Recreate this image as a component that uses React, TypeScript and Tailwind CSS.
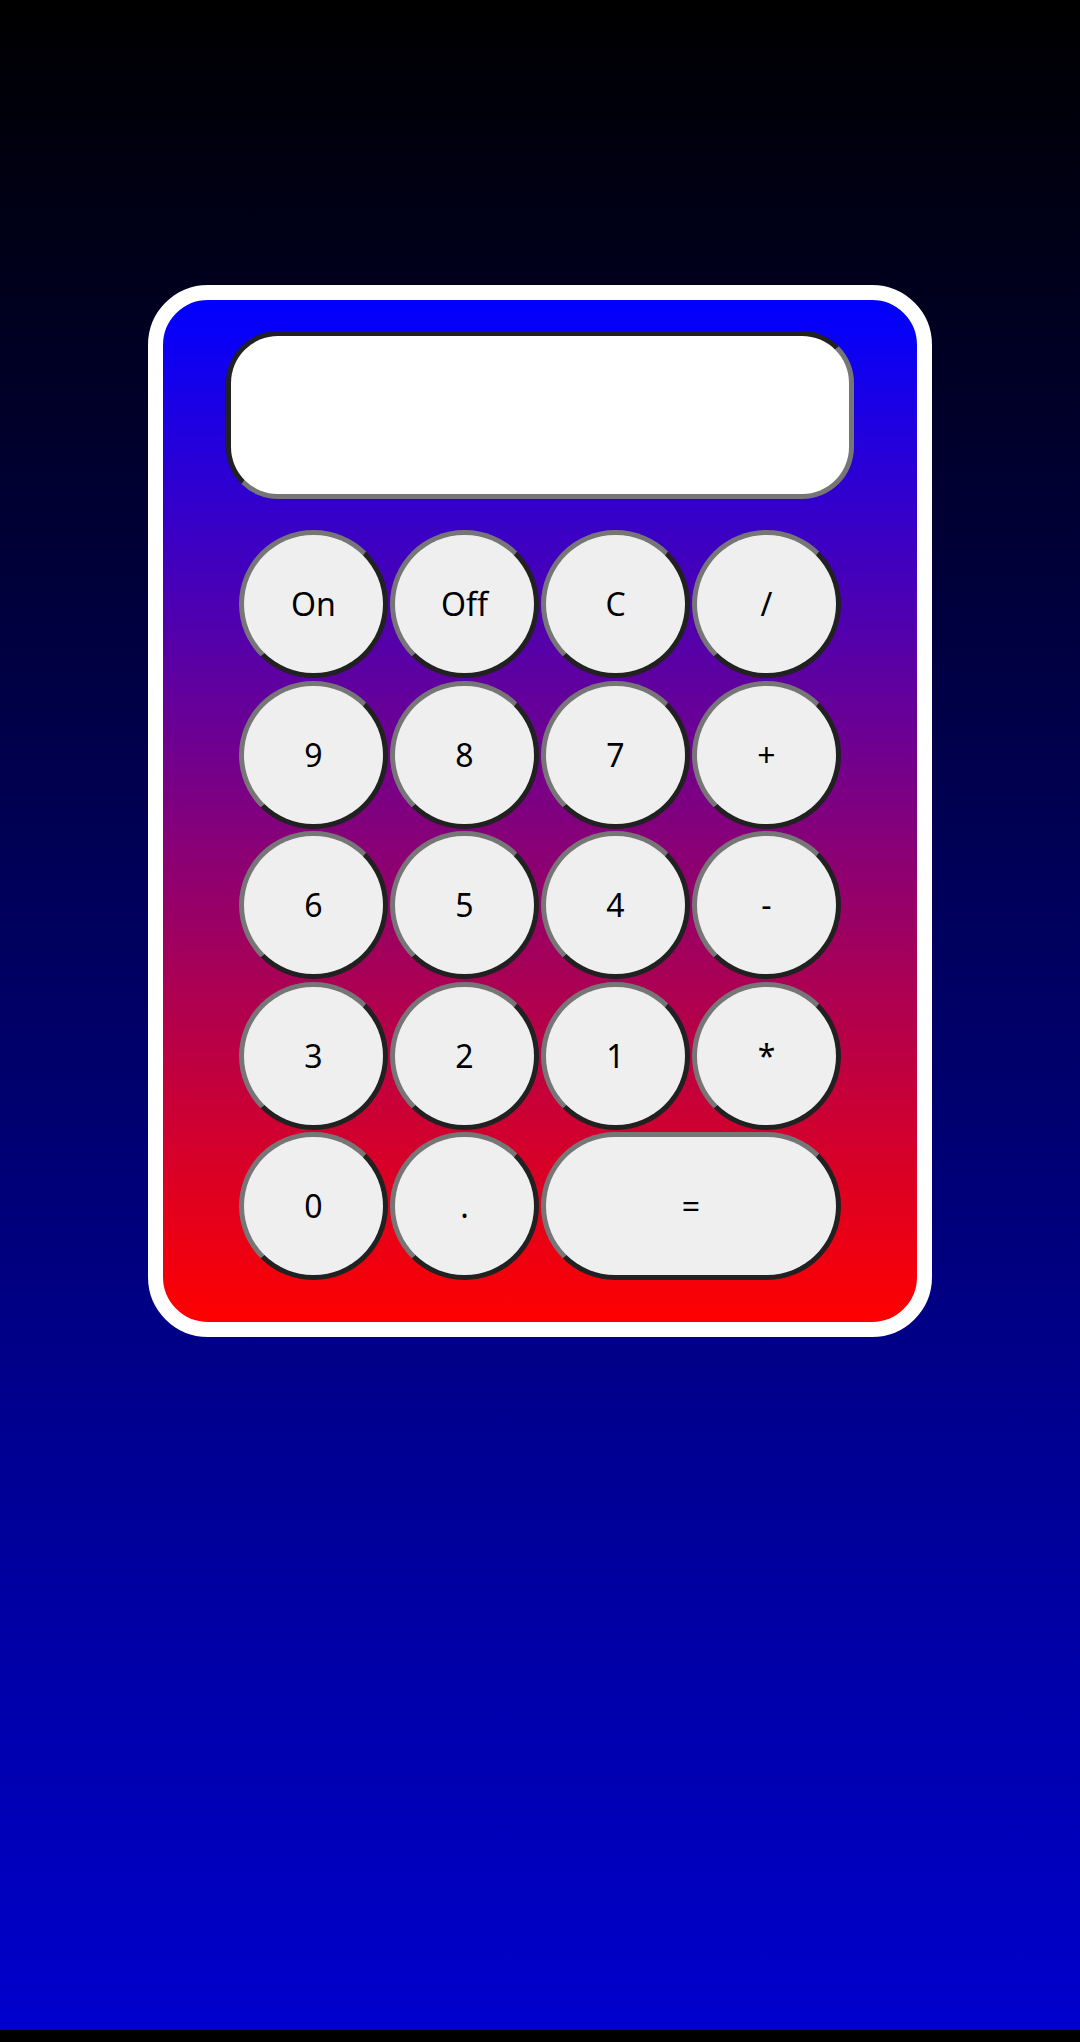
import React from "react";

const rows: string[][] = [
  ["On", "Off", "C", "/"],
  ["9", "8", "7", "+"],
  ["6", "5", "4", "-"],
  ["3", "2", "1", "*"],
];

const Key: React.FC<{ label: string; wide?: boolean }> = ({ label, wide }) => {
  return (
    <button
      className={
        wide
          ? "col-span-2 h-[148px] rounded-full bg-[#efefef] border-[5px] border-[#767676] [border-style:outset] text-[32px] text-black"
          : "w-[149px] h-[148px] rounded-full bg-[#efefef] border-[5px] border-[#767676] [border-style:outset] text-[32px] text-black"
      }
    >
      {label}
    </button>
  );
};

export default function App() {
  return (
    <div className="w-full h-[2042px] bg-black font-['Noto_Sans','Open_Sans',sans-serif]">
      <div className="h-[2030px] pt-[285px] bg-[linear-gradient(#000000,#0000cd)]">
        <div className="mx-auto w-[784px] h-[1052px] rounded-[60px] border-[15px] border-white bg-[linear-gradient(#0000ff,#ff0000)] pt-[31px]">
          <div className="mx-auto w-[628px] h-[168px] rounded-[52px] bg-white border-[5px] border-[#767676] [border-style:inset]"></div>
          <div className="mt-[31px] mx-auto w-[602px] grid grid-cols-[repeat(4,149px)] gap-x-[2px] gap-y-[2.5px]">
            {rows.map((row) =>
              row.map((k) => <Key key={k} label={k} />)
            )}
            <Key label="0" />
            <Key label="." />
            <Key label="=" wide />
          </div>
        </div>
      </div>
    </div>
  );
}
